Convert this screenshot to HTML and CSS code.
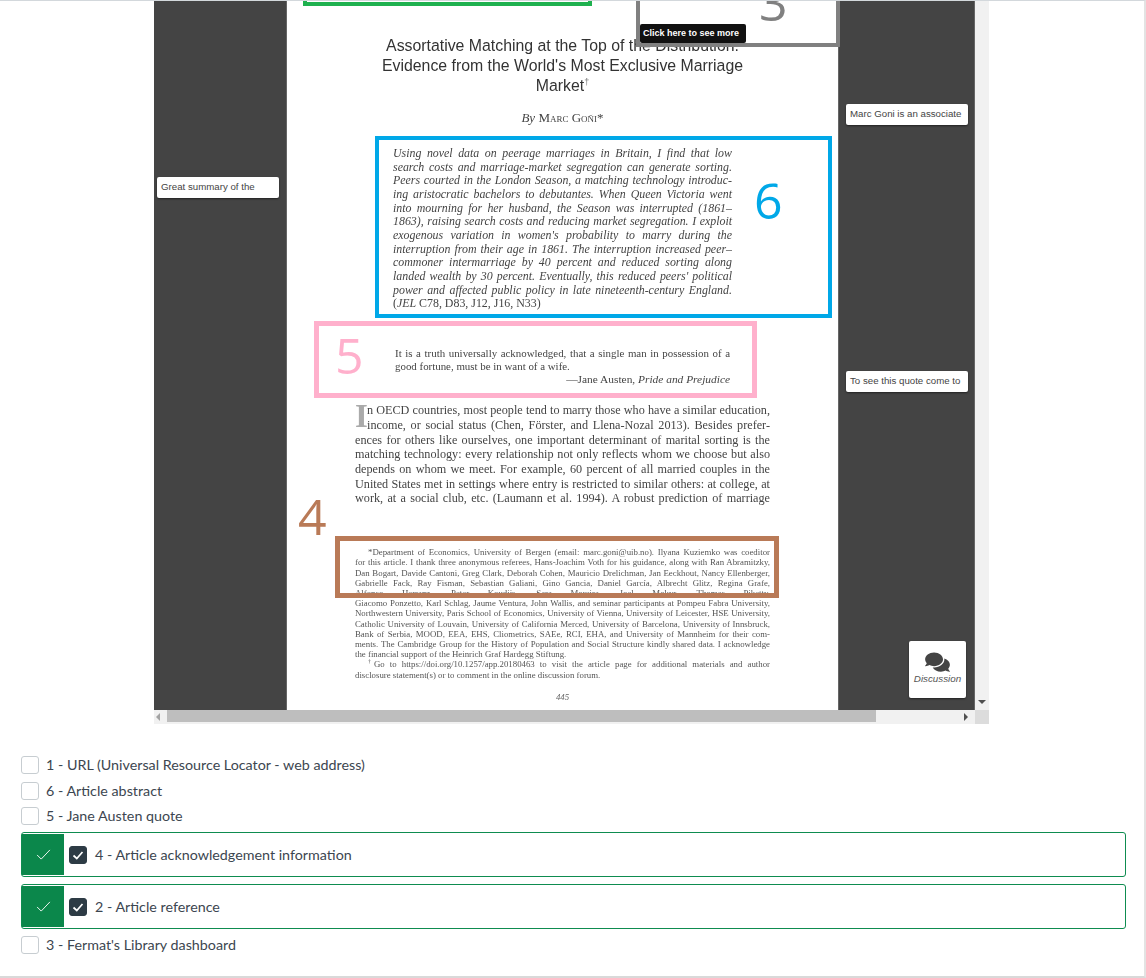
FILE: index.html
```html
<!DOCTYPE html>
<html lang="en">
<head>
<meta charset="utf-8">
<title>Article annotations</title>
<link rel="stylesheet" href="styles.css">
</head>
<body>
<main class="shell">
  <section class="viewer">
    <div class="viewport">
      <div class="gutter"></div>
      <article class="paper">
        <h1 class="title">
          <span>Assortative Matching at the Top of the Distribution:</span>
          <span>Evidence from the World's Most Exclusive Marriage</span>
          <span>Market<sup>†</sup></span>
        </h1>
        <p class="byline"><i>By</i> <span class="caps">Marc Goñi*</span></p>
        <div class="abstract">
          <span>Using novel data on peerage marriages in Britain, I find that low</span>
          <span>search costs and marriage-market segregation can generate sorting.</span>
          <span>Peers courted in the London Season, a matching technology introduc-</span>
          <span>ing aristocratic bachelors to debutantes. When Queen Victoria went</span>
          <span>into mourning for her husband, the Season was interrupted (1861–</span>
          <span>1863), raising search costs and reducing market segregation. I exploit</span>
          <span>exogenous variation in women's probability to marry during the</span>
          <span>interruption from their age in 1861. The interruption increased peer–</span>
          <span>commoner intermarriage by 40 percent and reduced sorting along</span>
          <span>landed wealth by 30 percent. Eventually, this reduced peers' political</span>
          <span>power and affected public policy in late nineteenth-century England.</span>
          <span class="end upright">(<i>JEL</i> C78, D83, J12, J16, N33)</span>
        </div>
        <div class="quote">
          <span>It is a truth universally acknowledged, that a single man in possession of a</span>
          <span class="end">good fortune, must be in want of a wife.</span>
          <span class="source">—Jane Austen, <i>Pride and Prejudice</i></span>
        </div>
        <div class="body-text">
          <b class="drop">I</b>
          <span>n OECD countries, most people tend to marry those who have a similar education,</span>
          <span>income, or social status (Chen, Förster, and Llena-Nozal 2013). Besides prefer-</span>
          <span>ences for others like ourselves, one important determinant of marital sorting is the</span>
          <span>matching technology: every relationship not only reflects whom we choose but also</span>
          <span>depends on whom we meet. For example, 60 percent of all married couples in the</span>
          <span>United States met in settings where entry is restricted to similar others: at college, at</span>
          <span>work, at a social club, etc. (Laumann et al. 1994). A robust prediction of marriage</span>
        </div>
        <div class="notes">
          <span class="indent">*Department of Economics, University of Bergen (email: marc.goni@uib.no). Ilyana Kuziemko was coeditor</span>
          <span>for this article. I thank three anonymous referees, Hans-Joachim Voth for his guidance, along with Ran Abramitzky,</span>
          <span>Dan Bogart, Davide Cantoni, Greg Clark, Deborah Cohen, Mauricio Drelichman, Jan Eeckhout, Nancy Ellenberger,</span>
          <span>Gabrielle Fack, Ray Fisman, Sebastian Galiani, Gino Gancia, Daniel García, Albrecht Glitz, Regina Grafe,</span>
          <span>Alfonso Herranz, Peter Koudijs, Sara Moreira, Joel Mokyr, Thomas Piketty,</span>
          <span>Giacomo Ponzetto, Karl Schlag, Jaume Ventura, John Wallis, and seminar participants at Pompeu Fabra University,</span>
          <span>Northwestern University, Paris School of Economics, University of Vienna, University of Leicester, HSE University,</span>
          <span>Catholic University of Louvain, University of California Merced, University of Barcelona, University of Innsbruck,</span>
          <span>Bank of Serbia, MOOD, EEA, EHS, Cliometrics, SAEe, RCI, EHA, and University of Mannheim for their com-</span>
          <span>ments. The Cambridge Group for the History of Population and Social Structure kindly shared data. I acknowledge</span>
          <span class="end">the financial support of the Heinrich Graf Hardegg Stiftung.</span>
          <span class="indent"><sup>†</sup>Go to https://doi.org/10.1257/app.20180463 to visit the article page for additional materials and author</span>
          <span class="end">disclosure statement(s) or to comment in the online discussion forum.</span>
        </div>
        <p class="folio">445</p>

        <div class="mark mark-green"></div>
        <div class="mark mark-grey"><span class="digit digit-3">3</span></div>
        <div class="tip">Click here to see more</div>
        <div class="mark mark-blue"><span class="digit digit-6">6</span></div>
        <div class="mark mark-pink"><span class="digit digit-5">5</span></div>
        <span class="digit digit-4">4</span>
        <div class="mark mark-brown"></div>
      </article>
      <div class="gutter gutter-right"></div>

      <div class="side side-a">Great summary of the</div>
      <div class="side side-b">Marc Goni is an associate</div>
      <div class="side side-c">To see this quote come to</div>
      <div class="discuss">
        <svg class="discuss-icon" viewBox="0 0 576 512" aria-hidden="true"><path d="M416 192c0-88.4-93.1-160-208-160S0 103.6 0 192c0 34.3 14.1 65.9 38 92-13.4 30.2-35.5 54.2-35.8 54.5-2.2 2.3-2.8 5.7-1.5 8.7S4.8 352 8 352c36.6 0 66.9-12.3 88.7-25 32.2 15.7 70.3 25 111.3 25 114.9 0 208-71.6 208-160zm122 220c23.9-26 38-57.7 38-92 0-66.9-53.5-124.2-129.3-148.1.9 6.6 1.3 13.3 1.3 20.1 0 105.9-107.7 192-240 192-10.8 0-21.3-.8-31.7-1.9C207.8 439.6 281.8 480 368 480c41 0 79.1-9.2 111.3-25 21.8 12.7 52.1 25 88.7 25 3.2 0 6.1-1.9 7.3-4.8 1.3-2.9.7-6.3-1.5-8.7-.3-.3-22.4-24.2-35.8-54.5z"/></svg>
        <span>Discussion</span>
      </div>
      <div class="vbar"><i class="arrow-down"></i></div>
    </div>
    <div class="hbar">
      <i class="arrow-left"></i>
      <div class="hthumb"></div>
      <i class="arrow-right"></i>
      <div class="corner"></div>
    </div>
  </section>

  <ul class="options">
    <li class="option"><span class="box"></span>1 - URL (Universal Resource Locator - web address)</li>
    <li class="option option-b"><span class="box"></span>6 - Article abstract</li>
    <li class="option option-c"><span class="box"></span>5 - Jane Austen quote</li>
    <li class="correct">
      <span class="flag"><svg viewBox="0 0 16 12" aria-hidden="true"><path class="tick-thin" d="M1 6.5 5.5 11 15 1"/></svg></span>
      <span class="box box-on"><svg viewBox="0 0 16 16" aria-hidden="true"><path class="tick" d="M3.5 8.5 6.8 11.5 12.5 5"/></svg></span>
      4 - Article acknowledgement information
    </li>
    <li class="correct correct-b">
      <span class="flag"><svg viewBox="0 0 16 12" aria-hidden="true"><path class="tick-thin" d="M1 6.5 5.5 11 15 1"/></svg></span>
      <span class="box box-on"><svg viewBox="0 0 16 16" aria-hidden="true"><path class="tick" d="M3.5 8.5 6.8 11.5 12.5 5"/></svg></span>
      2 - Article reference
    </li>
    <li class="option option-f"><span class="box"></span>3 - Fermat's Library dashboard</li>
  </ul>
</main>
</body>
</html>
```

FILE: styles.css
```css
* { box-sizing: border-box; }
html, body { margin: 0; padding: 0; background: #fff; }
body { overflow: hidden; }

.shell {
  width: 1146px;
  height: 978px;
  border-top: 1px solid #d3d8dc;
  border-right: 2px solid #e3e3e3;
  border-bottom: 2px solid #d9d9d9;
  overflow: hidden;
}

.viewer { width: 835px; margin-left: 154px; }

.viewport {
  position: relative;
  display: flex;
  height: 709px;
  overflow: hidden;
}

.gutter { width: 133px; background: #444; flex: none; border-right: 1px solid #666; }
.gutter-right { width: 137px; border-right: 1px solid #666; border-left: 1px solid #666; }

.paper {
  position: relative;
  width: 551px;
  flex: none;
  background: #fff;
  padding-top: 35px;
}

.title {
  margin: 0;
  font: 400 15.85px/20px "Liberation Sans", sans-serif;
  color: #333;
  text-align: center;
  filter: blur(.25px);
}
.title span { display: block; }
.title sup { font-size: 9px; line-height: 0; color: #777; }

.byline {
  margin: 14px 0 0;
  font: 400 13px/16px "Liberation Serif", serif;
  color: #444;
  text-align: center;
  filter: blur(.3px);
}
.caps { font-variant: small-caps; }

.abstract, .quote, .body-text, .notes { filter: blur(.35px); font-family: "Liberation Serif", serif; }
.abstract span, .quote span, .body-text span, .notes span { display: block; text-align: justify; text-align-last: justify; white-space: nowrap; }
.abstract .end, .quote .end, .notes .end { text-align-last: left; }

.abstract {
  margin: 21px 0 0 106px;
  width: 339px;
  font-style: italic;
  font-size: 11.9px;
  line-height: 13.65px;
  color: #444;
}
.upright { font-style: normal; }

.quote {
  margin: 36px 0 0 108px;
  width: 335px;
  font-size: 10.9px;
  line-height: 13px;
  color: #444;
}
.quote .source { text-align: right; text-align-last: right; font-size: 11.4px; }

.body-text {
  margin: 17.4px 0 0 68px;
  width: 415px;
  font-size: 12.2px;
  line-height: 14.7px;
  color: #444;
}
.drop {
  float: left;
  width: 12px;
  height: 28px;
  font: 700 33px/30px "Liberation Serif", serif;
  color: #aaa;
  margin-top: -2px;
}

.notes {
  margin: 41px 0 0 68px;
  width: 415px;
  font-size: 8.8px;
  line-height: 10.2px;
  color: #555;
}
.notes .indent { padding-left: 13px; }
.notes sup { font-size: 6px; line-height: 0; }

.folio {
  margin: 11px 0 0 68px;
  width: 415px;
  text-align: center;
  font: italic 400 8.8px/12px "Liberation Serif", serif;
  color: #666;
  filter: blur(.3px);
}

.mark { position: absolute; }
.mark-green { left: 16px; top: -10px; width: 289px; height: 15px; border: 4px solid #1fb14f; }
.mark-grey { left: 349px; top: -20px; width: 204px; height: 66px; border: 4px solid #808080; }
.mark-blue { left: 88px; top: 135px; width: 457px; height: 182px; border: 4px solid #00a8e8; }
.mark-pink { left: 27px; top: 320px; width: 443px; height: 77px; border: 5px solid #ffb0cc; }
.mark-brown { left: 48px; top: 535px; width: 444px; height: 62px; border: 5px solid #b97a57; }

.digit { position: absolute; font: 400 50px/50px "Open Sans", sans-serif; }
.digit-3 { color: #808080; left: 119px; top: -8px; }
.digit-6 { color: #00a8e8; left: 375px; top: 35px; }
.digit-5 { color: #ffb0cc; left: 16px; top: 4px; }
.digit-4 { color: #b97a57; left: 11px; top: 490px; }

.tip {
  position: absolute;
  left: 353px;
  top: 23px;
  width: 106px;
  height: 19px;
  padding-left: 3px;
  background: #111;
  border-radius: 2px;
  color: #fff;
  font: 700 9px/19px "Liberation Sans", sans-serif;
}

.side {
  position: absolute;
  width: 122px;
  height: 21px;
  padding-left: 4px;
  background: #fff;
  border-radius: 2px;
  box-shadow: 0 1px 2px rgba(0,0,0,.5);
  color: #444;
  font: 400 9.7px/20px "Liberation Sans", sans-serif;
  white-space: nowrap;
  overflow: hidden;
}
.side-a { left: 3px; top: 176px; }
.side-b { left: 692px; top: 103px; }
.side-c { left: 692px; top: 370px; }

.discuss {
  position: absolute;
  left: 755px;
  top: 640px;
  width: 57px;
  height: 57px;
  background: #fff;
  border-radius: 2px;
  box-shadow: 0 1px 2px rgba(0,0,0,.5);
  display: flex;
  flex-direction: column;
  align-items: center;
  padding-top: 10px;
  color: #555;
  font: italic 400 9.8px/12px "Liberation Sans", sans-serif;
}
.discuss-icon { width: 25px; height: 22px; fill: #444; margin-bottom: 0; }

.vbar { position: relative; flex: none; width: 14px; background: #f1f1f1; }
.arrow-down {
  position: absolute;
  left: 3px;
  bottom: 6px;
  border: 4px solid transparent;
  border-top: 4px solid #505050;
  border-bottom: 0;
}

.hbar { display: flex; align-items: center; height: 14px; background: #f1f1f1; }
.arrow-left { margin-left: 2px; border: 4px solid transparent; border-right: 4px solid #a3a3a3; border-left: 0; flex: none; }
.hthumb { margin-left: 7px; width: 709px; height: 12px; align-self: flex-start; background: #bebebe; flex: none; }
.arrow-right { margin-left: 88px; border: 4px solid transparent; border-left: 4px solid #505050; border-right: 0; flex: none; }
.corner { margin-left: auto; width: 14px; height: 14px; background: #dcdcdc; flex: none; }

.options {
  list-style: none;
  margin: 32px 18px 0 21px;
  padding: 0;
  font: 400 14.3px/18px Lato, sans-serif;
  color: #3c4650;
}
.option { display: flex; align-items: center; height: 18px; gap: 7px; }
.option-b { margin-top: 8px; }
.option-c { margin-top: 7px; }
.option-f { margin-top: 7px; }
.box {
  flex: none;
  width: 18px;
  height: 18px;
  border: 1px solid #c7cdd1;
  border-radius: 3px;
  background: #fff;
}
.box-on {
  display: flex;
  background: #2d3b45;
  border-color: #2d3b45;
  margin-right: 8px;
}
.box-on svg { width: 16px; height: 16px; }
.tick { fill: none; stroke: #fff; stroke-width: 1.7; }
.correct {
  display: flex;
  align-items: center;
  height: 45px;
  margin-top: 7px;
  border: 1px solid #0e8c50;
  border-radius: 3px;
}
.correct-b { margin-top: 7px; }
.flag {
  flex: none;
  display: flex;
  align-items: center;
  justify-content: center;
  width: 42px;
  height: 41px;
  margin-right: 5px;
  background: #0b874b;
}
.flag svg { width: 15px; height: 11px; }
.tick-thin { fill: none; stroke: #fff; stroke-width: 1; }
```
